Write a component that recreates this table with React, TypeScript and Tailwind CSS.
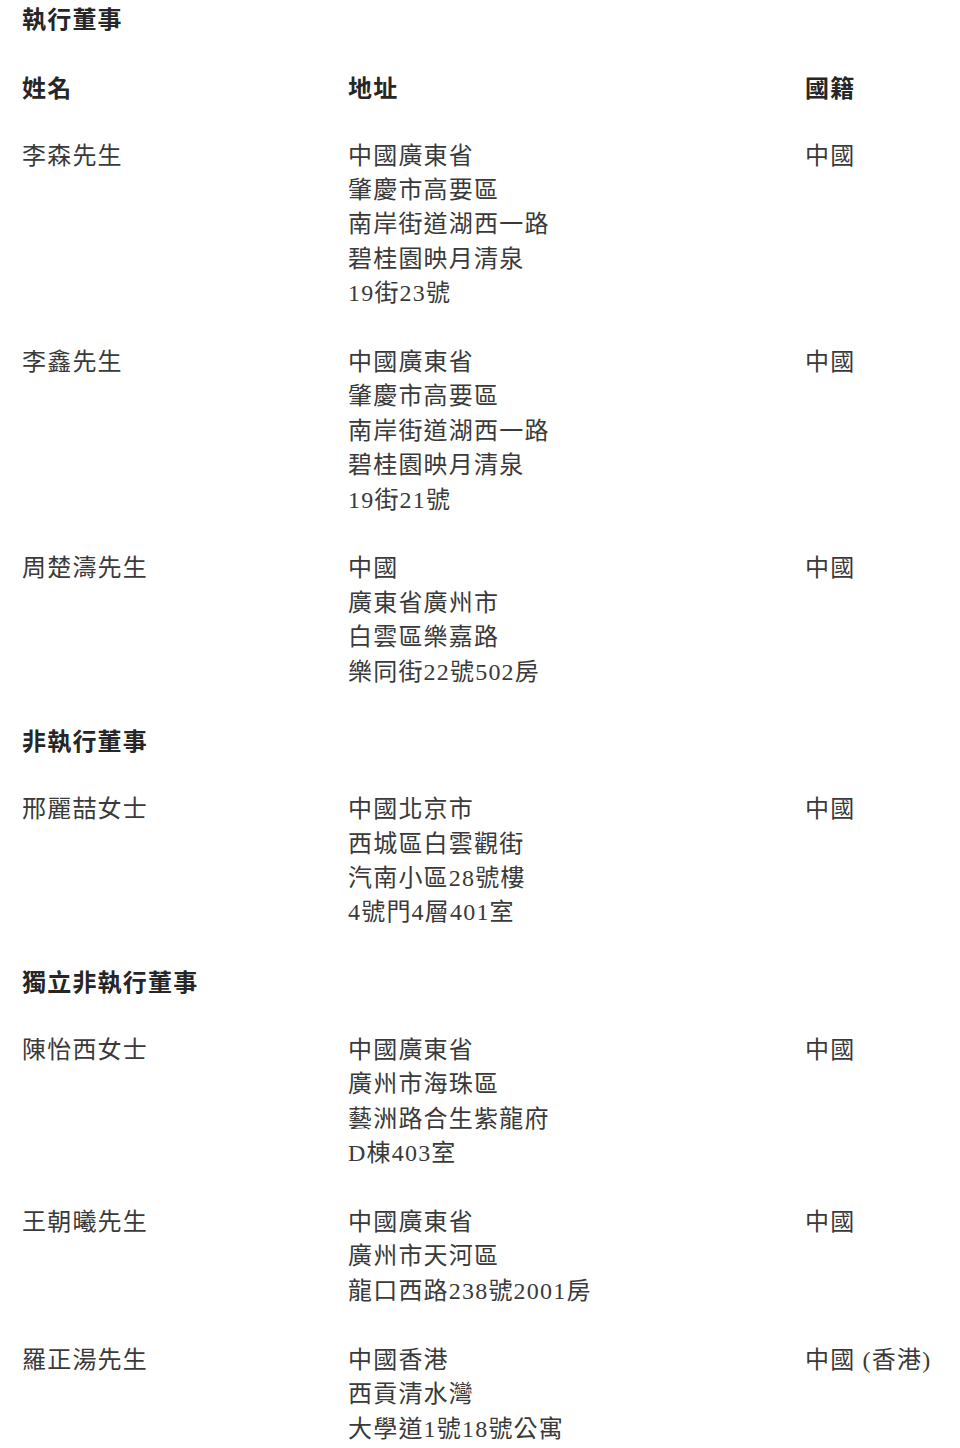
const rows1 = [
  {
    name: "李森先生",
    addr: ["中國廣東省", "肇慶市高要區", "南岸街道湖西一路", "碧桂園映月清泉", "19街23號"],
    nat: "中國",
  },
  {
    name: "李鑫先生",
    addr: ["中國廣東省", "肇慶市高要區", "南岸街道湖西一路", "碧桂園映月清泉", "19街21號"],
    nat: "中國",
  },
  {
    name: "周楚濤先生",
    addr: ["中國", "廣東省廣州市", "白雲區樂嘉路", "樂同街22號502房"],
    nat: "中國",
  },
];

const rows2 = [
  {
    name: "邢麗喆女士",
    addr: ["中國北京市", "西城區白雲觀街", "汽南小區28號樓", "4號門4層401室"],
    nat: "中國",
  },
];

const rows3 = [
  {
    name: "陳怡西女士",
    addr: ["中國廣東省", "廣州市海珠區", "藝洲路合生紫龍府", "D棟403室"],
    nat: "中國",
  },
  {
    name: "王朝曦先生",
    addr: ["中國廣東省", "廣州市天河區", "龍口西路238號2001房"],
    nat: "中國",
  },
  {
    name: "羅正湯先生",
    addr: ["中國香港", "西貢清水灣", "大學道1號18號公寓"],
    nat: "中國 (香港)",
  },
];

type Row = { name: string; addr: string[]; nat: string };

const Heading = ({ children }: { children: React.ReactNode }) => (
  <div className="mt-[34.4px] font-bold text-[#262626] [font-family:'Noto_Sans_CJK_TC',sans-serif] first:mt-0">
    {children}
  </div>
);

const DirectorRow = ({ row }: { row: Row }) => (
  <div className="mt-[34.4px] grid grid-cols-[326px_457px_1fr]">
    <div>{row.name}</div>
    <div>
      {row.addr.map((l) => (
        <div key={l}>{l}</div>
      ))}
    </div>
    <div>{row.nat}</div>
  </div>
);

export default function App() {
  return (
    <div className="min-h-[1448px] bg-white pl-[22px] pt-[1px] text-[24px] leading-[34.4px] tracking-[1.2px] text-[#3a3a3a] [font-family:'Liberation_Serif','Noto_Sans_CJK_TC',serif]">
      <Heading>執行董事</Heading>
      <div className="mt-[34.4px] grid grid-cols-[326px_457px_1fr] font-bold text-[#262626] [font-family:'Noto_Sans_CJK_TC',sans-serif]">
        <div>姓名</div>
        <div>地址</div>
        <div>國籍</div>
      </div>
      {rows1.map((r) => (
        <DirectorRow key={r.name} row={r} />
      ))}
      <Heading>非執行董事</Heading>
      {rows2.map((r) => (
        <DirectorRow key={r.name} row={r} />
      ))}
      <Heading>獨立非執行董事</Heading>
      {rows3.map((r) => (
        <DirectorRow key={r.name} row={r} />
      ))}
    </div>
  );
}
